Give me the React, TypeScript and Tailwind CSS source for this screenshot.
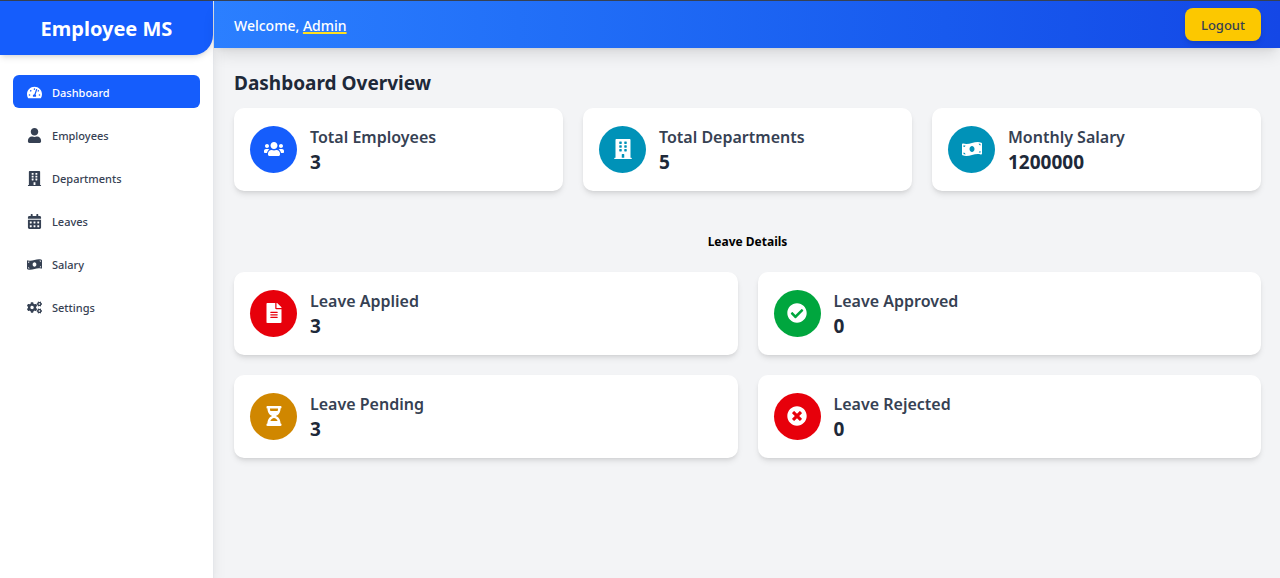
import type { IconType } from "react-icons";
import {
  FaBuilding,
  FaCalendarAlt,
  FaCheckCircle,
  FaCogs,
  FaFileAlt,
  FaHourglassHalf,
  FaMoneyBillWave,
  FaTachometerAlt,
  FaTimesCircle,
  FaUser,
  FaUsers,
} from "react-icons/fa";

interface NavItem {
  label: string;
  icon: IconType;
  active?: boolean;
}

interface Stat {
  label: string;
  value: number;
  icon: IconType;
  color: string;
}

const navItems: NavItem[] = [
  { label: "Dashboard", icon: FaTachometerAlt, active: true },
  { label: "Employees", icon: FaUser },
  { label: "Departments", icon: FaBuilding },
  { label: "Leaves", icon: FaCalendarAlt },
  { label: "Salary", icon: FaMoneyBillWave },
  { label: "Settings", icon: FaCogs },
];

const overview: Stat[] = [
  { label: "Total Employees", value: 3, icon: FaUsers, color: "bg-[#155dfc]" },
  { label: "Total Departments", value: 5, icon: FaBuilding, color: "bg-[#0092b8]" },
  { label: "Monthly Salary", value: 1200000, icon: FaMoneyBillWave, color: "bg-[#0092b8]" },
];

const leaves: Stat[] = [
  { label: "Leave Applied", value: 3, icon: FaFileAlt, color: "bg-[#e7000b]" },
  { label: "Leave Approved", value: 0, icon: FaCheckCircle, color: "bg-[#00a63e]" },
  { label: "Leave Pending", value: 3, icon: FaHourglassHalf, color: "bg-[#d08700]" },
  { label: "Leave Rejected", value: 0, icon: FaTimesCircle, color: "bg-[#e7000b]" },
];

function StatCard({ label, value, icon: Icon, color }: Stat) {
  return (
    <article className="flex items-center gap-[13px] rounded-[10px] bg-white px-4 pt-[15px] pb-4 shadow-md">
      <div className={`flex size-[47px] shrink-0 items-center justify-center rounded-full text-white ${color}`}>
        <Icon size={20} />
      </div>
      <div className="pt-[2px]">
        <h3 className="text-base leading-[25px] font-semibold text-[#364153]">{label}</h3>
        <p className="text-[19px] leading-[25px] font-bold text-[#1e2939]">{value}</p>
      </div>
    </article>
  );
}

function Sidebar() {
  return (
    <aside className="w-[214px] shrink-0 border-r border-gray-200 bg-white shadow-lg">
      <div className="flex h-[54px] items-center justify-center rounded-br-[20px] bg-[#155dfc] pt-[2px] shadow-md">
        <h1 className="text-xl font-bold text-white">Employee MS</h1>
      </div>
      <nav className="flex flex-col gap-[10px] px-[13px] pt-5">
        {navItems.map(({ label, icon: Icon, active }) => (
          <a
            key={label}
            href="#"
            className={`flex items-center gap-[10px] rounded-md px-[14px] pt-2 pb-[6px] text-[11px] leading-[19px] font-medium ${
              active ? "bg-[#155dfc] text-white" : "text-[#364153]"
            }`}
          >
            <Icon size={15} />
            <span>{label}</span>
          </a>
        ))}
      </nav>
    </aside>
  );
}

export default function App() {
  return (
    <div className="flex min-h-screen border-t border-[#364153] bg-gray-100 font-['Noto_Sans','Open_Sans',sans-serif]">
      <Sidebar />
      <div className="min-w-0 flex-1">
        <header className="flex h-[47px] items-center justify-between bg-linear-to-r from-[#2b7fff] to-[#1447e6] pr-[19px] pl-5 shadow-lg">
          <p className="pt-[2px] text-sm font-medium text-white">
            Welcome, <span className="underline decoration-[#ffdf20] decoration-2">Admin</span>
          </p>
          <button
            type="button"
            className="rounded-lg bg-[#fcc800] px-4 pt-2 pb-[6px] text-[13px] leading-[19px] font-medium text-[#364153] shadow-md"
          >
            Logout
          </button>
        </header>
        <main className="pt-[22px] pr-[19px] pb-5 pl-5">
          <h2 className="text-[19px] leading-[27px] font-bold text-[#1e2939]">Dashboard Overview</h2>
          <section className="mt-[11px] grid grid-cols-3 gap-5">
            {overview.map((stat) => (
              <StatCard key={stat.label} {...stat} />
            ))}
          </section>
          <section className="mt-[41px]">
            <h4 className="text-center text-xs leading-5 font-bold text-black">Leave Details</h4>
            <div className="mt-5 grid grid-cols-2 gap-5">
              {leaves.map((stat) => (
                <StatCard key={stat.label} {...stat} />
              ))}
            </div>
          </section>
        </main>
      </div>
    </div>
  );
}
